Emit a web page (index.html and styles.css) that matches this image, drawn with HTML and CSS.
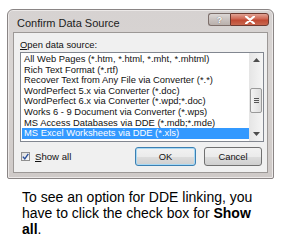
FILE: index.html
```html
<!DOCTYPE html>
<html>
<head>
<meta charset="utf-8">
<link rel="stylesheet" href="styles.css">
</head>
<body>
<div class="dialog">
  <div class="titlebar">
    <span class="title">Confirm Data Source</span>
    <div class="caption-btns">
      <span class="cap-btn help">?</span>
      <span class="cap-btn close">
        <svg width="10" height="8" viewBox="0 0 10 8"><path d="M1 0.5 L9 7.5 M9 0.5 L1 7.5" stroke="#fff" stroke-width="2.2" stroke-linecap="round"/></svg>
      </span>
    </div>
  </div>
  <div class="client">
    <div class="label"><u>O</u>pen data source:</div>
    <div class="listbox">
      <ul class="items">
        <li>All Web Pages (*.htm, *.html, *.mht, *.mhtml)</li>
        <li>Rich Text Format (*.rtf)</li>
        <li>Recover Text from Any File via Converter (*.*)</li>
        <li>WordPerfect 5.x via Converter (*.doc)</li>
        <li>WordPerfect 6.x via Converter (*.wpd;*.doc)</li>
        <li>Works 6 - 9 Document via Converter (*.wps)</li>
        <li>MS Access Databases via DDE (*.mdb;*.mde)</li>
        <li class="selected">MS Excel Worksheets via DDE (*.xls)</li>
      </ul>
      <div class="scrollbar">
        <svg class="arrow" width="7" height="4" viewBox="0 0 7 4"><path d="M0 4 L3.5 0 L7 4Z" fill="#4d4d4d"/></svg>
        <div class="track">
          <div class="thumb"><span></span><span></span><span></span></div>
        </div>
        <svg class="arrow" width="7" height="4" viewBox="0 0 7 4"><path d="M0 0 L3.5 4 L7 0Z" fill="#4d4d4d"/></svg>
      </div>
    </div>
    <div class="bottom">
      <label class="check">
        <span class="box"><svg width="7" height="7" viewBox="0 0 7 7"><path d="M0.8 3.6 L2.8 5.8 L6.3 0.8" stroke="#2a4f9a" stroke-width="1.4" fill="none"/></svg></span>
        <span><u>S</u>how all</span>
      </label>
      <div class="buttons">
        <span class="btn default">OK</span>
        <span class="btn">Cancel</span>
      </div>
    </div>
  </div>
</div>
<p class="note">To see an option for DDE linking, you have to click the check box for <b>Show all</b>.</p>
</body>
</html>
```
FILE: styles.css
```css
html, body {
  margin: 0;
  padding: 0;
  background: #fff;
}
body {
  width: 285px;
  height: 243px;
  overflow: hidden;
}
.dialog {
  margin: 9px 0 0 7px;
  border: 1px solid #8a8585;
  border-radius: 6px 6px 2px 2px;
  background: linear-gradient(180deg, #d6d2d1 0%, #d9d5d3 40%, #cfcac8 100%);
  box-shadow: inset 0 0 0 1px #ece9e8;
  display: flex;
  flex-direction: column;
  padding: 0 5px 5px 5px;
  box-sizing: border-box;
  width: 267px;
  height: 170px;
  font-family: "Liberation Sans", Arial, sans-serif;
}
.titlebar {
  height: 22px;
  display: flex;
  align-items: flex-start;
  justify-content: space-between;
}
.title {
  font-size: 11px;
  color: #1c1c1c;
  padding: 7px 0 0 4px;
}
.caption-btns {
  display: flex;
  margin-top: 3px;
  margin-right: -1px;
}
.cap-btn {
  height: 11px;
  display: flex;
  align-items: center;
  justify-content: center;
  border: 1px solid #7d6f6b;
  box-sizing: content-box;
}
.help {
  width: 21px;
  border-radius: 3px 0 0 3px;
  border-right: none;
  background: linear-gradient(180deg, #dcd7d5 0%, #c9c2bf 50%, #b9b0ac 100%);
  color: #fff;
  font-size: 9px;
  font-weight: bold;
  text-shadow: 0 0 1px #555;
}
.close {
  width: 37px;
  border-radius: 0 3px 3px 0;
  background: linear-gradient(180deg, #e0a394 0%, #cf6652 45%, #c04a33 55%, #c9684f 100%);
  border-color: #6e3a30;
}
.client {
  flex: 1;
  background: #f0f0f0;
  border: 1px solid #9c9896;
  padding: 5px 3px 0 6px;
  display: flex;
  flex-direction: column;
  font-size: 9.4px;
  color: #111;
}
.label {
  height: 13px;
  line-height: 13px;
}
.listbox {
  margin-top: 1px;
  height: 90px;
  border: 1px solid #828790;
  background: #fff;
  display: flex;
  box-sizing: border-box;
}
.items {
  list-style: none;
  margin: 0;
  padding: 1px 0 0 1px;
  flex: 1;
}
.items li {
  height: 10.6px;
  line-height: 10.6px;
  padding-left: 2px;
  white-space: nowrap;
  overflow: hidden;
}
.items li.selected {
  background: #3399ff;
  color: #fff;
}
.scrollbar {
  width: 14px;
  background: linear-gradient(90deg, #e5e5e5, #f5f5f5);
  display: flex;
  flex-direction: column;
  align-items: center;
  justify-content: space-between;
  padding: 5px 0;
  box-sizing: border-box;
}
.track {
  flex: 1;
  width: 100%;
  padding-top: 26px;
}
.thumb {
  margin: 0 auto;
  width: 12px;
  height: 25px;
  border: 1px solid #9a9a9a;
  border-radius: 2px;
  box-sizing: border-box;
  background: linear-gradient(90deg, #f3f3f3, #dedede);
  display: flex;
  flex-direction: column;
  align-items: center;
  justify-content: center;
  gap: 1px;
}
.thumb span {
  width: 5px;
  height: 1px;
  background: #555;
}
.bottom {
  flex: 1;
  display: flex;
  align-items: center;
  justify-content: space-between;
  padding-bottom: 1px;
}
.check {
  display: flex;
  align-items: center;
  gap: 5px;
  margin-left: 1px;
  font-size: 9.6px;
}
.box {
  width: 9px;
  height: 9px;
  border: 1px solid #8f8f8f;
  background: linear-gradient(135deg, #dcdcdc, #fbfbfb);
  box-sizing: border-box;
  display: flex;
  align-items: center;
  justify-content: center;
}
.buttons {
  display: flex;
  gap: 8px;
  margin-right: 2px;
}
.btn {
  width: 61px;
  height: 19px;
  box-sizing: border-box;
  border: 1px solid #707070;
  border-radius: 3px;
  background: linear-gradient(180deg, #f2f2f2 0%, #ebebeb 50%, #dddddd 51%, #cfcfcf 100%);
  display: flex;
  align-items: center;
  justify-content: center;
  font-size: 9.4px;
}
.btn + .btn {
  width: 58px;
}
.btn.default {
  border-color: #3c7fb1;
  box-shadow: inset 0 0 0 1px #a7d9f5;
}
.note {
  margin: 10px 0 0 22px;
  width: 242px;
  font-family: "Liberation Sans", Arial, sans-serif;
  font-size: 14px;
  line-height: 16px;
  color: #000;
}
```
